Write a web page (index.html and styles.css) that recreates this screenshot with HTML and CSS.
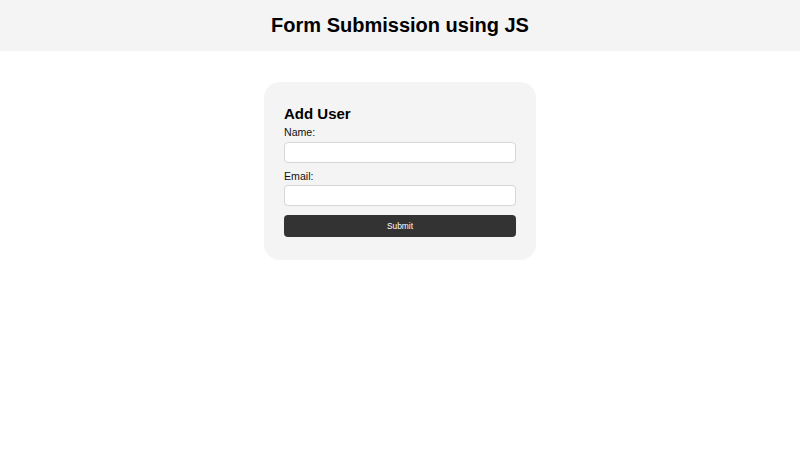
FILE: index.html
```html
<!DOCTYPE html>
<html>
<head>
<meta charset="utf-8">
<link rel="stylesheet" href="styles.css">
</head>
<body>
<header class="top">
  <h1 class="title">Form Submission using JS</h1>
</header>
<main class="main">
  <form class="card">
    <h2 class="card-title">Add User</h2>
    <label class="label" for="name">Name:</label>
    <input class="input" id="name" type="text">
    <label class="label" for="email">Email:</label>
    <input class="input" id="email" type="email">
    <button class="btn" type="button">Submit</button>
  </form>
</main>
</body>
</html>
```
FILE: styles.css
```css
html, body { margin: 0; padding: 0; background: #fff; }
body { font-family: "Liberation Sans", Arial, sans-serif; color: #000; }
.top { background: #f4f4f4; height: 51px; display: flex; align-items: center; justify-content: center; }
.title { margin: 0; font-size: 20px; line-height: 23px; font-weight: bold; }
.main { display: flex; justify-content: center; padding-top: 31px; }
.card { width: 232px; background: #f4f4f4; border-radius: 16px; padding: 23px 20px 23px; display: flex; flex-direction: column; }
.card-title { margin: 0 0 5px; font-size: 15px; line-height: 17px; font-weight: bold; }
.label { font-size: 10.6px; line-height: 11.5px; margin-bottom: 3px; color: #111; }
.input { box-sizing: border-box; height: 21px; border: 1px solid #d6d6d6; border-radius: 4px; background: #fff; margin: 0 0 8px; padding: 0 5px; }
.btn { margin-top: 1px; height: 22px; border: none; border-radius: 4px; background: #333; color: #fff; font-family: "Liberation Sans", Arial, sans-serif; font-size: 8.4px; padding: 0; }
```
